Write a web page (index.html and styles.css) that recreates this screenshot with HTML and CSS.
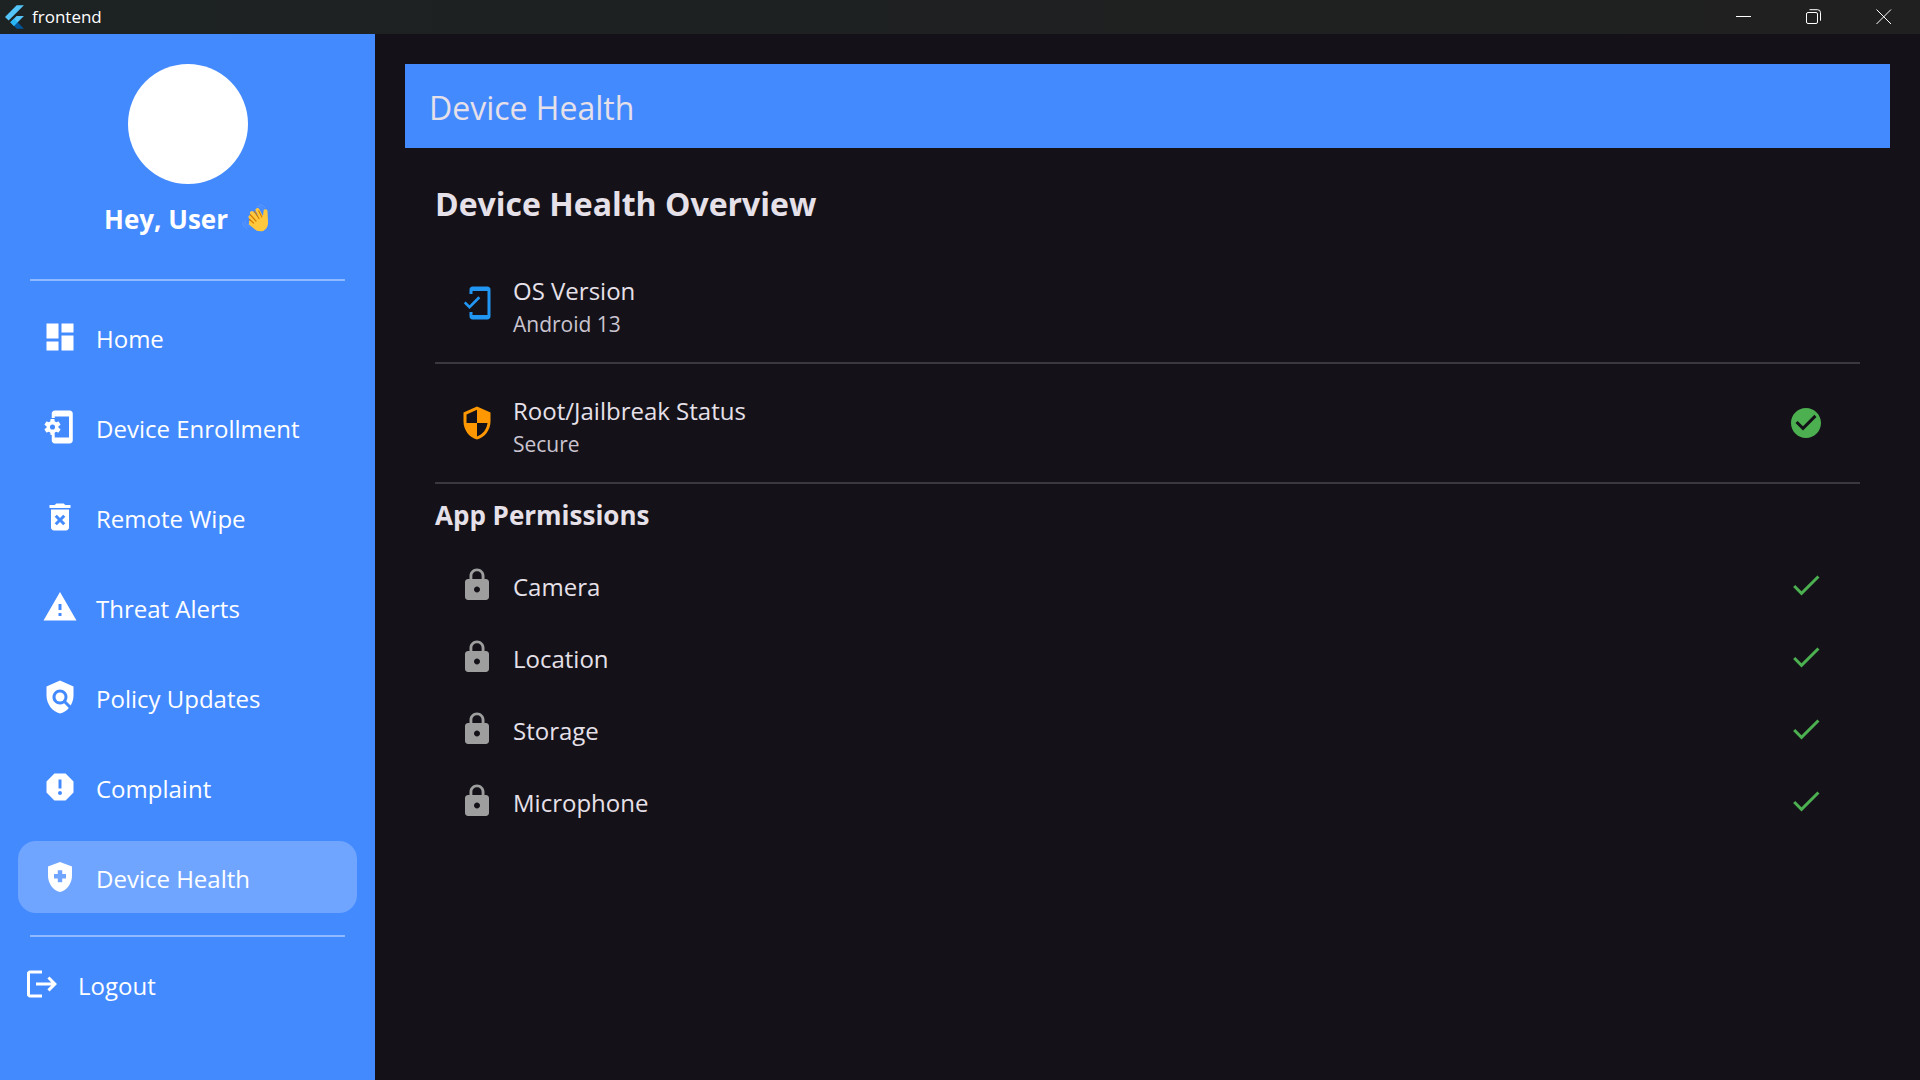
FILE: index.html
```html
<!DOCTYPE html>
<html lang="en">
<head>
<meta charset="utf-8">
<meta name="viewport" content="width=device-width, initial-scale=1">
<title>frontend</title>
<link rel="stylesheet" href="styles.css">
</head>
<body>
<svg class="sprite" aria-hidden="true">
  <symbol id="lock" viewBox="0 0 24 24"><path d="M18 8h-1V6c0-2.76-2.24-5-5-5S7 3.24 7 6v2H6c-1.1 0-2 .9-2 2v10c0 1.1.9 2 2 2h12c1.1 0 2-.9 2-2V10c0-1.1-.9-2-2-2zm-6 9c-1.1 0-2-.9-2-2s.9-2 2-2 2 .9 2 2-.9 2-2 2zM8.900 8V6c0-1.710 1.390-3.100 3.100-3.100s3.100 1.390 3.100 3.100v2z"/></symbol>
  <symbol id="check" viewBox="0 0 24 24"><path d="M9 16.170L4.830 12l-1.420 1.410L9 19 21 7l-1.410-1.410z"/></symbol>
</svg>
<header class="titlebar">
  <svg class="logo" viewBox="0 0 256 317" aria-hidden="true">
    <path fill="#54c5f8" d="M157.670 0L0 157.670l48.800 48.800L255.270 0zM156.570 145.400L72.150 229.800 121 279.400l134.270-134z"/>
    <path fill="#01579b" d="M121 279.400l37.200 37.200h97.070l-85.430-86z"/>
    <path fill="#29b6f6" d="M71.600 230.360l48.800-48.800 49.440 49.040L121 279.400z"/>
  </svg>
  <span class="window-title">frontend</span>
  <div class="window-controls">
    <button type="button" aria-label="Minimize"><svg viewBox="0 0 16 16"><path d="M0 7.500h15"/></svg></button>
    <button type="button" aria-label="Restore"><svg viewBox="0 0 16 16"><rect x="0.500" y="3.500" width="11" height="11" rx="1.500"/><path d="M3.500 .7h8a3 3 0 0 1 3 3v8"/></svg></button>
    <button type="button" aria-label="Close"><svg viewBox="0 0 16 16"><path d="M.5.5l14.500 14.500M15 .5L.5 15"/></svg></button>
  </div>
</header>
<div class="app">
  <aside class="sidebar">
    <div class="avatar"></div>
    <p class="greeting">Hey, User
      <svg class="wave" viewBox="0 0 30 30" aria-hidden="true">
        <g fill="none" stroke="#5b98fb" stroke-linecap="round"><path d="M16 2.500Q20.500 1.500 22 6M18 .8Q22.500 .5 24 4M4 17Q3.500 21 8 22.500M1.500 18.500Q2 23 6 24.500"/></g>
        <g stroke="#ffc83d" stroke-width="4" stroke-linecap="round"><path d="M10 18L19 23M9.500 13l8 7M11 9l8 9M16.500 6l5 10"/></g>
        <path fill="#ffc83d" d="M10 17l10-7 2 2 .5-5c.2-2.500 4-2.300 4 .2l.5 10c.5 5.500-2.500 10-7.500 10-3 0-5-1-7-3l-5-4z"/>
        <path fill="none" stroke="#d67d00" stroke-width="1.200" stroke-linecap="round" d="M8.500 15.500l4 3.500M9.500 11l5.500 6M13.500 7.500l4.500 7M17.800 7l3 6"/>
      </svg>
    </p>
    <hr class="rule">
    <nav class="nav">
      <a href="#home"><svg class="icon" viewBox="0 0 24 24"><path d="M3 13h8V3H3v10zm0 8h8v-6H3v6zm10 0h8V11h-8v10zm0-18v6h8V3h-8z"/></svg><span>Home</span></a>
      <a href="#enrollment"><svg class="icon" viewBox="0 0 24 24"><path d="M18.500 1h-10c-1.100 0-2 .9-2 2v3h2V5h9.500v14H8.500v-2h-2v4c0 1.100.9 2 2 2h10c1.100 0 2-.9 2-2V3c0-1.100-.9-2-2-2z"/><path fill-rule="evenodd" transform="translate(-1 0)" d="M12 12.500v-1l1.200-.8c.1-.1.1-.2.100-.3l-1.200-2c-.1-.1-.2-.2-.3-.1l-1.400.5c-.3-.2-.6-.4-.9-.5l-.2-1.500c0-.1-.1-.2-.3-.2H7c-.1 0-.3.1-.3.200l-.2 1.500c-.3.1-.6.3-.9.500l-1.400-.5c-.1 0-.2 0-.3.100l-1.200 2c0 .1 0 .2.100.3l1.200.8v1l-1.200.8c-.1.100-.1.200-.1.300l1.200 2c.1.100.2.200.3.100l1.400-.5c.3.200.6.400.9.500l.2 1.500c0 .1.200.2.300.2h2c.2 0 .3-.1.300-.2l.2-1.500c.3-.1.600-.3.900-.5l1.400.5c.1.100.2 0 .3-.1l1.200-2c0-.1 0-.2-.1-.3zM8 13.700a1.700 1.700 0 1 1 0-3.400 1.700 1.700 0 0 1 0 3.400z"/></svg><span>Device Enrollment</span></a>
      <a href="#wipe"><svg class="icon" viewBox="0 0 24 24"><path d="M6 19c0 1.100.9 2 2 2h8c1.100 0 2-.9 2-2V7H6v12zm2.460-7.120l1.410-1.410L12 12.590l2.120-2.120 1.410 1.410L13.410 14l2.120 2.120-1.410 1.410L12 15.410l-2.120 2.120-1.410-1.410L10.590 14l-2.130-2.120zM15.500 4l-1-1h-5l-1 1H5v2h14V4z"/></svg><span>Remote Wipe</span></a>
      <a href="#threats"><svg class="icon" viewBox="0 0 24 24"><path d="M1 21h22L12 2 1 21zm12-3h-2v-2h2v2zm0-4h-2v-4h2v4z"/></svg><span>Threat Alerts</span></a>
      <a href="#policy"><svg class="icon" viewBox="0 0 24 24"><path d="M21 5l-9-4-9 4v6c0 5.550 3.840 10.740 9 12 2.300-.56 4.330-1.900 5.880-3.710l-3.120-3.120c-1.940 1.290-4.580 1.070-6.290-.64-1.950-1.950-1.950-5.120 0-7.070s5.120-1.950 7.070 0c1.710 1.710 1.920 4.350.64 6.290l2.900 2.900C20.290 15.690 21 13.380 21 11V5z"/><circle cx="12" cy="12" r="3"/></svg><span>Policy Updates</span></a>
      <a href="#complaint"><svg class="icon" viewBox="0 0 24 24"><path d="M15.730 3H8.270L3 8.270v7.460L8.270 21h7.460L21 15.730V8.270L15.730 3zM12 17.300c-.72 0-1.300-.58-1.300-1.300s.58-1.300 1.300-1.300 1.300.58 1.300 1.300-.58 1.300-1.300 1.300zm1-4.300h-2V7h2v6z"/></svg><span>Complaint</span></a>
      <a class="active" href="#health" aria-current="page"><svg class="icon" viewBox="0 0 24 24"><path fill-rule="evenodd" d="M12 2L4 5v6.090c0 5.050 3.410 9.760 8 10.910 4.590-1.150 8-5.860 8-10.910V5zM10.500 13H8v-3h2.500V7.500h3V10H16v3h-2.500v2.500h-3z"/></svg><span>Device Health</span></a>
    </nav>
    <hr class="rule">
    <a class="logout" href="#logout"><svg class="icon" viewBox="0 0 24 24"><path d="M17 7l-1.410 1.410L18.170 11H8v2h10.170l-2.580 2.580L17 17l5-5zM4 5h8V3H4c-1.100 0-2 .9-2 2v14c0 1.100.9 2 2 2h8v-2H4V5z"/></svg><span>Logout</span></a>
  </aside>
  <main class="main">
    <h1 class="appbar">Device Health</h1>
    <section class="content">
      <h2>Device Health Overview</h2>
      <ul class="status">
        <li>
          <svg class="icon blue" viewBox="0 0 24 24"><path d="M19 1H9c-1.100 0-2 .9-2 2v3h2V4h10v16H9v-2H7v3c0 1.100.9 2 2 2h10c1.100 0 2-.9 2-2V3c0-1.100-.9-2-2-2zM7.010 13.470l-2.550-2.550-1.270 1.270L7 16l7.190-7.190-1.270-1.270z"/></svg>
          <div class="label"><p>OS Version</p><p class="sub">Android 13</p></div>
        </li>
        <li>
          <svg class="icon orange" viewBox="0 0 24 24"><path d="M12 1L3 5v6c0 5.550 3.840 10.740 9 12 5.160-1.260 9-6.450 9-12V5l-9-4zm0 10.990h7c-.53 4.120-3.280 7.790-7 8.940V12H5V6.300l7-3.110v8.800z"/></svg>
          <div class="label"><p>Root/Jailbreak Status</p><p class="sub">Secure</p></div>
          <svg class="icon green" viewBox="0 0 24 24" role="img" aria-label="Passed"><path d="M12 2C6.480 2 2 6.480 2 12s4.480 10 10 10 10-4.480 10-10S17.520 2 12 2zm-2 15l-5-5 1.410-1.410L10 14.170l7.590-7.590L19 8l-9 9z"/></svg>
        </li>
      </ul>
      <h3>App Permissions</h3>
      <ul class="permissions">
        <li><svg class="icon grey"><use href="#lock"/></svg><span class="label">Camera</span><svg class="icon green" role="img" aria-label="Allowed"><use href="#check"/></svg></li>
        <li><svg class="icon grey"><use href="#lock"/></svg><span class="label">Location</span><svg class="icon green" role="img" aria-label="Allowed"><use href="#check"/></svg></li>
        <li><svg class="icon grey"><use href="#lock"/></svg><span class="label">Storage</span><svg class="icon green" role="img" aria-label="Allowed"><use href="#check"/></svg></li>
        <li><svg class="icon grey"><use href="#lock"/></svg><span class="label">Microphone</span><svg class="icon green" role="img" aria-label="Allowed"><use href="#check"/></svg></li>
      </ul>
    </section>
  </main>
</div>
</body>
</html>
```
FILE: styles.css
```css
* { box-sizing: border-box; }
body {
  margin: 0;
  min-height: 100vh;
  display: flex;
  flex-direction: column;
  background: #141218;
  color: #e6e0e9;
  font: 24px/36px "Open Sans", "Noto Sans", sans-serif;
}
h1, h2, h3, p, ul { margin: 0; padding: 0; }
ul { list-style: none; }
a { color: inherit; text-decoration: none; }
.sprite { display: none; }

.titlebar {
  display: flex;
  align-items: center;
  height: 34px;
  padding: 0 1px 0 5px;
  background: linear-gradient(90deg, #1d2223, #202020);
  color: #fff;
  font-size: 17px;
}
.logo { width: 19px; height: 24px; }
.window-title { margin-left: 8px; }
.window-controls { display: flex; margin-left: auto; }
.window-controls button {
  display: grid;
  place-items: center;
  width: 70px;
  height: 34px;
  padding: 0;
  border: 0;
  background: none;
}
.window-controls svg { width: 16px; height: 16px; fill: none; stroke: #fff; }

.app { flex: 1; display: flex; }
.icon { flex: none; width: 36px; height: 36px; fill: currentColor; }
.blue { color: #2196f3; }
.orange { color: #ff9800; }
.grey { color: #9e9e9e; }
.green { color: #4caf50; }

.sidebar {
  flex: none;
  width: 375px;
  padding: 30px 0;
  background: #448aff;
  color: #fff;
}
.avatar {
  width: 120px;
  height: 120px;
  margin: 0 auto 17px;
  border-radius: 50%;
  background: #fff;
}
.greeting {
  display: flex;
  justify-content: center;
  align-items: center;
  gap: 13px;
  margin-bottom: 42px;
  font-size: 26px;
  font-weight: 700;
}
.wave { width: 30px; height: 30px; }
.rule {
  height: 2px;
  margin: 0 30px;
  border: 0;
  background: #8fb9ff;
}
.nav {
  display: flex;
  flex-direction: column;
  gap: 18px;
  padding: 20px 18px 22px;
}
.nav a, .logout {
  display: flex;
  align-items: center;
  gap: 18px;
  height: 72px;
  padding: 0 24px;
  border-radius: 18px;
}
.nav span, .logout span { padding-top: 4px; }
.nav .active { background: #70a5ff; }
.logout { margin-top: 11px; }

.main { flex: 1; min-width: 0; padding: 30px; }
.appbar {
  padding: 26px 24px 22px;
  background: #448aff;
  font-size: 32px;
  font-weight: 400;
}
.content { padding: 32px 30px; }
h2 { margin-bottom: 16px; font-size: 32px; line-height: 48px; }
h3 { margin: 13px 0 16px; font-size: 26px; }
.status li, .permissions li {
  display: flex;
  align-items: center;
  gap: 18px;
  height: 72px;
  padding: 0 36px 0 24px;
}
.status li { height: 120px; border-bottom: 2px solid #3b393f; }
.label { flex: 1; padding-top: 4px; }
.status .label { padding-top: 6px; }
.sub { color: #cac4d0; font-size: 21px; line-height: 30px; }
```
